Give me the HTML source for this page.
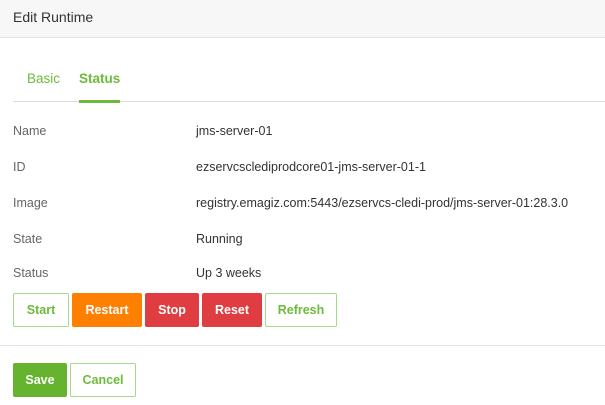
<!DOCTYPE html><html><head><style>
body{margin:0;width:605px;height:405px;background:#fff;font-family:"Liberation Sans",sans-serif;font-size:12.5px;color:#333;position:relative;overflow:hidden}
.hdr{position:absolute;left:0;top:0;width:605px;height:37px;background:#f7f7f7;border-bottom:1px solid #e3e3e3}
.hdr span{position:absolute;left:13px;top:9px;font-size:14px;color:#333}
.tab{position:absolute;top:71px;font-size:13.5px;color:#6dbb3a}
.line{position:absolute;left:13px;width:592px;height:1px;background:#ddd}
.lbl{position:absolute;left:13px;color:#666}
.val{position:absolute;left:196px;color:#333}
.b{position:absolute;box-sizing:border-box;height:34px;border-radius:2px;font-weight:bold;text-align:center;line-height:32px;font-size:12.5px;border:1px solid transparent}
.g{border:1px solid #a6d987;color:#6dbb3a;background:#fff}
</style></head><body>
<div class="hdr"><span>Edit Runtime</span></div>
<div class="tab" style="left:27px">Basic</div>
<div class="tab" style="left:79px;font-weight:bold">Status</div>
<div class="line" style="top:101px"></div>
<div style="position:absolute;left:79px;top:100px;width:41px;height:3px;background:#6dbb3a"></div>
<div class="lbl" style="top:124px">Name</div><div class="val" style="top:124px">jms-server-01</div>
<div class="lbl" style="top:160px">ID</div><div class="val" style="top:160px">ezservcsclediprodcore01-jms-server-01-1</div>
<div class="lbl" style="top:196px">Image</div><div class="val" style="top:196px">registry.emagiz.com:5443/ezservcs-cledi-prod/jms-server-01:28.3.0</div>
<div class="lbl" style="top:232px">State</div><div class="val" style="top:232px">Running</div>
<div class="lbl" style="top:266px">Status</div><div class="val" style="top:266px">Up 3 weeks</div>
<div class="b g" style="left:13px;top:293px;width:56px">Start</div>
<div class="b" style="left:72px;top:293px;width:70px;background:#ff7f00;color:#fff">Restart</div>
<div class="b" style="left:145px;top:293px;width:54px;background:#e03d42;color:#fff">Stop</div>
<div class="b" style="left:202px;top:293px;width:60px;background:#e03d42;color:#fff">Reset</div>
<div class="b g" style="left:265px;top:293px;width:72px">Refresh</div>
<div style="position:absolute;left:0;top:345px;width:605px;height:1px;background:#e3e3e3"></div>
<div class="b" style="left:13px;top:363px;width:54px;background:#65b32e;color:#fff">Save</div>
<div class="b g" style="left:70px;top:363px;width:66px">Cancel</div>
</body></html>
